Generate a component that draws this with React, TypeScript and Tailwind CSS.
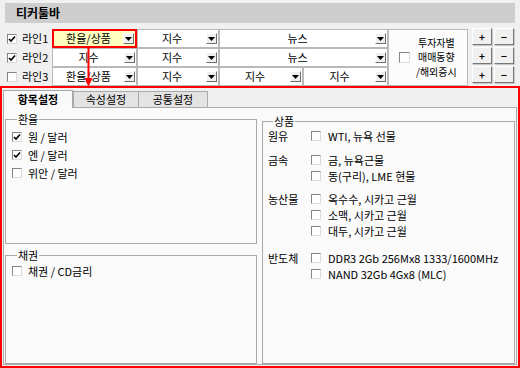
import React from 'react';

const FONT = { fontFamily: '"Noto Sans CJK KR", "Noto Sans", sans-serif' };

const Check: React.FC<{ checked?: boolean; big?: boolean }> = ({ checked, big }) => (
    <span
        className={`${big ? 'w-[11px] h-[11px]' : 'w-[10px] h-[10px]'} shrink-0 bg-white border border-[#858585] border-r-[#dadada] border-b-[#dadada] flex items-center justify-center`}
    >
        {checked && (
            <svg width="8" height="8" viewBox="0 0 8 8">
                <polyline points="1,4 3,6 7,1.5" fill="none" stroke="#000" strokeWidth="1.6" />
            </svg>
        )}
    </span>
);

const DropBtn: React.FC = () => (
    <span className="w-[11px] h-[11px] mr-[1px] shrink-0 bg-[#f0f0f0] border border-white border-r-[#6e6e6e] border-b-[#6e6e6e] flex items-center justify-center">
        <svg width="7" height="4" viewBox="0 0 7 4">
            <polygon points="0,0 7,0 3.5,4" fill="#000" />
        </svg>
    </span>
);

const Combo: React.FC<{ label: string; w: string; active?: boolean }> = ({ label, w, active }) => (
    <div
        className={`${w} h-full flex items-center ${active ? 'border-2 border-[#ff0000] bg-[#ffffc0]' : 'border border-[#b9b9b9] bg-white'}`}
    >
        <span className="flex-1 text-center text-[11px] leading-none">{label}</span>
        <DropBtn />
    </div>
);

const LineRow: React.FC<{ n: number; checked: boolean; children: React.ReactNode }> = ({ n, checked, children }) => (
    <div className="flex h-[19px]">
        <div className="w-[47px] flex items-center pl-[2px] gap-[5px] text-[11px]">
            <Check checked={checked} />
            <span>라인{n}</span>
        </div>
        {children}
    </div>
);

const PmBtn: React.FC<{ sign: string }> = ({ sign }) => (
    <div className="w-[20px] h-[17px] bg-[#f0f0f0] border border-white border-r-[#777] border-b-[#777] shadow-[1px_1px_0_#c8c8c8] flex items-center justify-center text-[10px] font-bold leading-none">
        {sign}
    </div>
);

const Group: React.FC<{ title: string; className?: string; children: React.ReactNode }> = ({ title, className, children }) => (
    <fieldset className={`border border-[#a9a9a9] ${className ?? ''}`}>
        <legend className="ml-[5px] px-[1px] text-[11px] leading-[14px]">{title}</legend>
        {children}
    </fieldset>
);

const Item: React.FC<{ label: string; checked?: boolean }> = ({ label, checked }) => (
    <div className="h-[18px] flex items-center gap-[6px] text-[11px]">
        <Check checked={checked} />
        <span>{label}</span>
    </div>
);

const Goods: React.FC<{ cat: string; items: string[]; className?: string }> = ({ cat, items, className }) => (
    <div className={`flex ${className ?? ''}`}>
        <div className="w-[43px] h-[16px] flex items-center text-[11px]">{cat}</div>
        <div className="flex flex-col">
            {items.map(t => (
                <div key={t} className="h-[16px] flex items-center gap-[7px] text-[11px]">
                    <Check />
                    <span>{t}</span>
                </div>
            ))}
        </div>
    </div>
);

export default function App() {
    return (
        <div className="w-[520px] h-[368px] bg-[#f0f0f0] text-black relative overflow-hidden" style={FONT}>
            <div className="mx-[5px] mt-[3px] h-[20px] bg-[#cdcdcd] flex items-center pl-[11px]">
                <span className="text-[12px] font-bold">티커툴바</span>
            </div>

            <div className="flex mt-[6px] ml-[5px] h-[57px]">
                <div className="flex flex-col w-[383px]">
                    <LineRow n={1} checked>
                        <Combo label="환율/상품" w="w-[85px]" active />
                        <Combo label="지수" w="w-[82px]" />
                        <Combo label="뉴스" w="w-[169px]" />
                    </LineRow>
                    <LineRow n={2} checked>
                        <Combo label="지수" w="w-[85px]" />
                        <Combo label="지수" w="w-[82px]" />
                        <Combo label="뉴스" w="w-[169px]" />
                    </LineRow>
                    <LineRow n={3} checked={false}>
                        <Combo label="환율/상품" w="w-[85px]" />
                        <Combo label="지수" w="w-[82px]" />
                        <Combo label="지수" w="w-[84px]" />
                        <Combo label="지수" w="w-[85px]" />
                    </LineRow>
                </div>
                <div className="w-[80px] border border-[#b9b9b9] bg-[#fcfcfc] flex items-center pl-[10px] gap-[6px]">
                    <Check big />
                    <div className="flex flex-col items-center text-[10px] leading-[14.5px]">
                        <span>투자자별</span>
                        <span>매매동향</span>
                        <span>/해외증시</span>
                    </div>
                </div>
                <div className="ml-[4px] -mt-[1px] flex flex-col gap-[2px]">
                    {[0, 1, 2].map(i => (
                        <div key={i} className="flex gap-[2px]">
                            <PmBtn sign="+" />
                            <PmBtn sign="−" />
                        </div>
                    ))}
                </div>
            </div>

            <svg className="absolute left-[84px] top-[47px]" width="9" height="41" viewBox="0 0 9 41">
                <line x1="4.5" y1="0" x2="4.5" y2="33" stroke="#ff0000" strokeWidth="2" />
                <polygon points="0.5,31 8.5,31 4.5,40" fill="#ff0000" />
            </svg>

            <div className="w-[520px] h-[282px] border-2 border-[#ff0000] flex flex-col">
                <div className="flex items-end h-[19px] pl-[1px]">
                    <div className="w-[70px] h-[18px] bg-[#f9f9f9] border border-b-0 border-[#a9a9a9] -mb-px relative z-10 flex items-center justify-center text-[11px] font-bold">
                        항목설정
                    </div>
                    <div className="w-[66px] h-[16px] bg-[#e3e3e3] border border-b-0 border-[#a9a9a9] flex items-center justify-center text-[11px]">
                        속성설정
                    </div>
                    <div className="w-[69px] h-[16px] bg-[#e3e3e3] border border-b-0 border-l-0 border-[#a9a9a9] flex items-center justify-center text-[11px]">
                        공통설정
                    </div>
                </div>
                <div className="flex-1 mx-[1px] mb-[1px] border border-[#a9a9a9] bg-[#fafafa] flex gap-[5px] pl-[1px] pt-[4px]">
                    <div className="w-[252px] flex flex-col">
                        <Group title="환율" className="h-[132px] pl-[6px] pt-[2px]">
                            <Item label="원 / 달러" checked />
                            <Item label="엔 / 달러" checked />
                            <Item label="위안 / 달러" />
                        </Group>
                        <Group title="채권" className="flex-1 mt-[4px] pl-[6px]">
                            <Item label="채권 / CD금리" />
                        </Group>
                    </div>
                    <Group title="상품" className="w-[253px] mt-[2px] pl-[5px]">
                        <Goods cat="원유" items={['WTI, 뉴욕 선물']} />
                        <Goods cat="금속" items={['금, 뉴욕근물', '동(구리), LME 현물']} className="mt-[8px]" />
                        <Goods cat="농산물" items={['옥수수, 시카고 근월', '소맥, 시카고 근월', '대두, 시카고 근월']} className="mt-[7px]" />
                        <Goods cat="반도체" items={['DDR3 2Gb 256Mx8 1333/1600MHz', 'NAND 32Gb 4Gx8 (MLC)']} className="mt-[11px]" />
                    </Group>
                </div>
            </div>
        </div>
    );
}
